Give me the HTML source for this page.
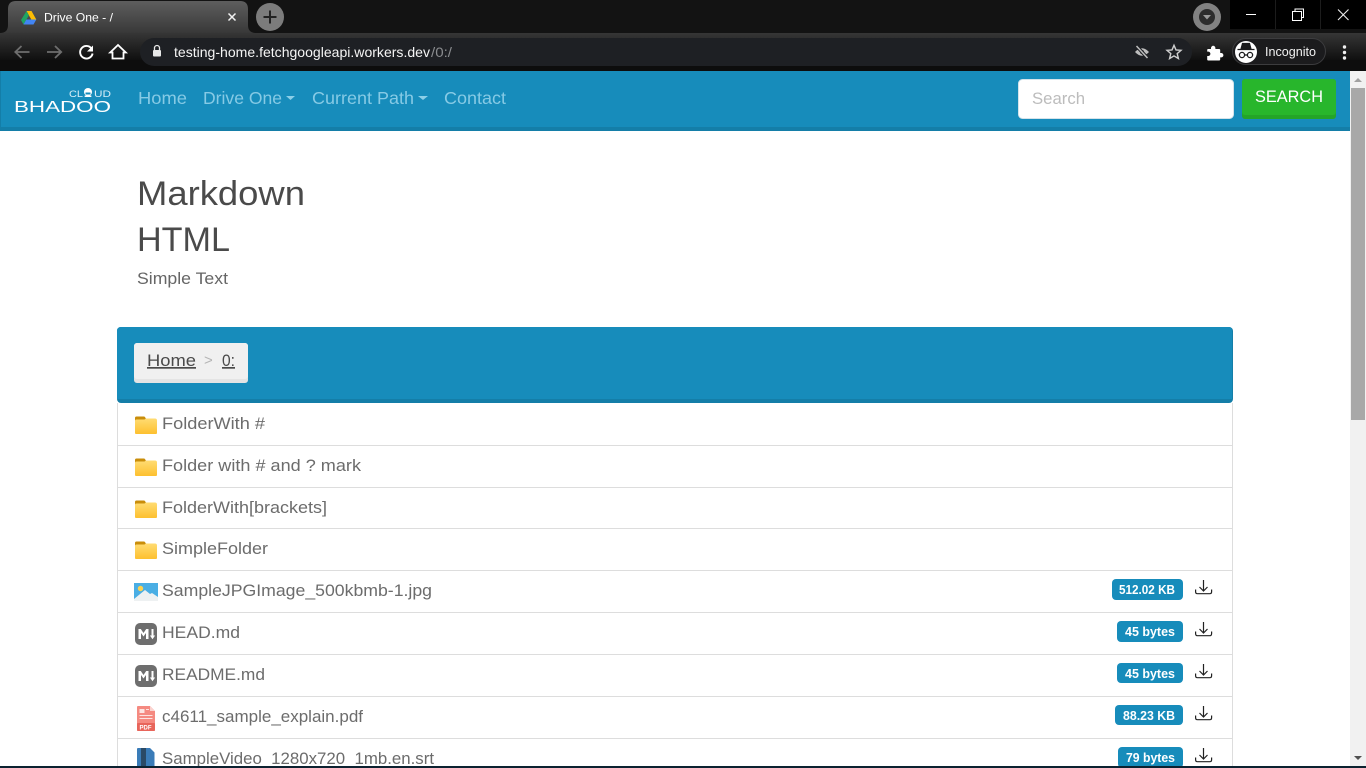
<!DOCTYPE html>
<html lang="en"><head><meta charset="utf-8"><title>Drive One - /</title>
<style>
html,body{margin:0;padding:0;width:1366px;height:768px;overflow:hidden;background:#fff}
svg{display:block;position:absolute;left:0;top:0}
text{font-family:"Liberation Sans",sans-serif}
.m{fill:#6c6c6c;font-size:17px}
.n{fill:#86cae5;font-size:17.5px}
.b{fill:#fff;font-size:13px;font-weight:bold}
.d{fill:none;stroke:#222;stroke-width:1.2}
</style></head><body>
<svg width="1366" height="768" viewBox="0 0 1366 768" xmlns="http://www.w3.org/2000/svg">
<defs>
<linearGradient id="tab" x1="0" y1="0" x2="0" y2="1"><stop offset="0" stop-color="#5e5e5e"/><stop offset="1" stop-color="#383838"/></linearGradient>
<linearGradient id="tb" x1="0" y1="0" x2="0" y2="1"><stop offset="0" stop-color="#363636"/><stop offset="1" stop-color="#0e0e0e"/></linearGradient>
<linearGradient id="fo" x1="0" y1="0" x2="0" y2="1"><stop offset="0" stop-color="#ffdc73"/><stop offset="1" stop-color="#fdc02f"/></linearGradient>
<g id="folder"><path d="M0 3q0-1.500 1.500-1.500h7.500q1 0 2 2.500v3H0z" fill="#c98d0a"/><path d="M0 6q0-1.500 1.500-1.500h8l1.500-1h9q2 0 2 2V18q0 1-1 1H1q-1 0-1-1z" fill="url(#fo)"/></g>
<g id="md"><rect x="0" y="0" width="22" height="22" rx="5" fill="#6e6e6e"/><path d="M3.500 16V6h2.300l2.700 4 2.700-4h2.300v10h-2.500v-6l-2.500 3.500L6 10v6z" fill="#fff"/><path d="M16.500 6h2v6.500h1.600L17.500 16.300 14.900 12.500h1.600z" fill="#fff"/></g>
<g id="dl"><path class="d" d="M8.500 0v10.500M4.500 7l4 4 4-4"/><path class="d" d="M.6 9.500v2.200q0 2 2 2h12q2 0 2-2V9.500"/></g>
</defs>

<!-- browser frame -->
<rect width="1366" height="71" fill="#0e0e0e"/>
<rect width="1366" height="33" fill="#131313"/>
<rect x="1230" y="0" width="136" height="29" fill="#000"/>
<path d="M1275.500 0v29M1320.500 0v29" stroke="#1c1c1c"/>
<rect y="33" width="1366" height="28" fill="url(#tb)"/>
<rect y="60" width="1366" height="11" fill="#0d0d0d"/>
<path d="M0 33q8 0 8-8V9q0-8 8-8h224q8 0 8 8v16q0 8 8 8z" fill="url(#tab)"/>
<path d="M26.500 11h5l4.800 8.500h-5z" fill="#fbbc04"/><path d="M26.500 11l-5.500 9 2.500 4.500 5.400-9.200z" fill="#1fa463"/><path d="M23.500 24.500h10l2.800-5H26.300z" fill="#4285f4"/>
<text x="44" y="21.500" fill="#fff" font-size="12" textLength="69" lengthAdjust="spacingAndGlyphs">Drive One - /</text>
<path d="M228.500 13.500l7 7M235.500 13.500l-7 7" stroke="#f2f2f2" stroke-width="1.500"/>
<circle cx="270" cy="17" r="14" fill="#7c7c7c"/><path d="M263.500 17h13M270 10.500v13" stroke="#222" stroke-width="2"/>
<circle cx="1207" cy="17" r="14" fill="#828282"/><circle cx="1207" cy="17" r="8" fill="#2c2c2c"/><path d="M1203 15h8l-4 4.500z" fill="#9a9a9a"/>
<path d="M1246 14.500h10" stroke="#fff" stroke-width="1"/>
<path d="M1292.500 11.500h9v9h-9zM1295 11.500V9h8.500v8.500h-2" fill="none" stroke="#fff" stroke-width="1"/>
<path d="M1338 9.500l10.500 10.500M1348.500 9.500L1338 20" stroke="#eee" stroke-width="1.100"/>

<path d="M29.500 52H15.500M21.500 46l-6.200 6 6.200 6" fill="none" stroke="#6e6e6e" stroke-width="1.800"/>
<path d="M47 52h14M55 46l6.200 6-6.200 6" fill="none" stroke="#6e6e6e" stroke-width="1.800"/>
<path d="M91.500 48.500a6.300 6.300 0 1 0 1.100 5" fill="none" stroke="#fff" stroke-width="1.900"/><path d="M93 45.500v6h-6z" fill="#fff"/>
<path d="M118 45l-7.800 7.500h2.300v6h11v-6h2.300z" fill="none" stroke="#fff" stroke-width="1.800"/>
<rect x="140" y="38" width="1052" height="28" rx="14" fill="#1e2024"/>
<path d="M154.500 50v-2a2.500 2.500 0 0 1 5 0v2" fill="none" stroke="#e8e8e8" stroke-width="1.300"/><rect x="153" y="50" width="8" height="6.500" rx="1" fill="#e8e8e8"/>
<text x="174" y="57" fill="#f5f5f5" font-size="14" textLength="256" lengthAdjust="spacingAndGlyphs">testing-home.fetchgoogleapi.workers.dev</text>
<text x="431" y="57" fill="#8b8d90" font-size="14" textLength="21" lengthAdjust="spacingAndGlyphs">/0:/</text>
<path d="M1135 52q7-7.500 14 0-7 7.500-14 0z" fill="#bdbdbd"/><circle cx="1142" cy="52" r="2" fill="#1e2024"/><path d="M1136.500 46l11 12" stroke="#1e2024" stroke-width="3.500"/><path d="M1136.500 46l11 12" stroke="#bdbdbd" stroke-width="1.500"/>
<path d="M1174 45.300l2 4.600 5 .4-3.800 3.300 1.200 4.900-4.400-2.600-4.400 2.600 1.200-4.900-3.800-3.300 5-.4z" fill="none" stroke="#cfcfcf" stroke-width="1.400"/>
<path d="M1207.500 49h3.500v-1a2.200 2.200 0 0 1 4.400 0v1h3.800q1 0 1 1v3h1a2.200 2.200 0 0 1 0 4.400h-1v2.100q0 1-1 1h-11q-1 0-1-1v-3.500h1a2.200 2.200 0 0 0 0-4.400h-1V50q0-1 .800-1z" fill="#fff"/>
<rect x="1232.500" y="38.500" width="93" height="26" rx="13" fill="#1b1b1d" stroke="#3c3c3e"/>
<circle cx="1246" cy="52" r="11" fill="#fff"/>
<path d="M1237.500 49.500h17M1241 49l1.500-5.500h7L1251 49z" fill="#1b1b1d" stroke="#1b1b1d" stroke-width="1.200"/>
<circle cx="1242" cy="55" r="2.600" fill="none" stroke="#1b1b1d" stroke-width="1.300"/><circle cx="1250" cy="55" r="2.600" fill="none" stroke="#1b1b1d" stroke-width="1.300"/><path d="M1244.600 55h2.800" stroke="#1b1b1d" stroke-width="1.300"/>
<text x="1265" y="56" fill="#f2f2f2" font-size="12.500" textLength="51" lengthAdjust="spacingAndGlyphs">Incognito</text>
<circle cx="1344.500" cy="47" r="1.700" fill="#f0f0f0"/><circle cx="1344.500" cy="52.500" r="1.700" fill="#f0f0f0"/><circle cx="1344.500" cy="58" r="1.700" fill="#f0f0f0"/>

<!-- scrollbar -->
<rect x="1350" y="71" width="16" height="697" fill="#f1f1f1"/>
<rect x="1351" y="88" width="14" height="332" fill="#a8a8a8"/>
<path d="M1354 82h8l-4-4z" fill="#a0a0a0"/><path d="M1354 756h8l-4 4z" fill="#505050"/>

<!-- navbar -->
<rect y="71" width="1350" height="60" fill="#178cbb"/>
<rect y="127" width="1350" height="4" fill="#147ea8"/>
<rect y="71" width="1" height="60" fill="#147ea8"/>
<text x="69" y="97" font-size="9.500" textLength="14" lengthAdjust="spacingAndGlyphs" fill="#d8eef7">CL</text>
<circle cx="88" cy="92" r="4" fill="#fff"/><rect x="85.500" y="92.500" width="5" height="2" fill="#178cbb"/>
<rect x="84.500" y="95.500" width="7" height="1.500" rx=".7" fill="#fff"/>
<text x="94" y="97" font-size="9.500" textLength="17" lengthAdjust="spacingAndGlyphs" fill="#d8eef7">UD</text>
<text x="14" y="112" font-size="15.500" textLength="97" lengthAdjust="spacingAndGlyphs" fill="#fff">BHADOO</text>

<text class="n" x="138" y="104" textLength="49" lengthAdjust="spacingAndGlyphs">Home</text>
<text class="n" x="203" y="104" textLength="79" lengthAdjust="spacingAndGlyphs">Drive One</text>
<path d="M286 96h9l-4.500 4z" fill="#8ccfe8"/>
<text class="n" x="312" y="104" textLength="102" lengthAdjust="spacingAndGlyphs">Current Path</text>
<path d="M418 96h10l-5 4z" fill="#8ccfe8"/>
<text class="n" x="444" y="104" textLength="62" lengthAdjust="spacingAndGlyphs">Contact</text>

<rect x="1018.500" y="79.500" width="215" height="39" rx="4" fill="#fff" stroke="#d5e3ea"/>
<text x="1032" y="104" font-size="17" fill="#bcbcbc" textLength="53" lengthAdjust="spacingAndGlyphs">Search</text>
<rect x="1242" y="79" width="94" height="40" rx="3" fill="#24a428"/>
<rect x="1242" y="79" width="94" height="36" rx="3" fill="#28b62c"/>
<text x="1255" y="102" font-size="17" fill="#fff" textLength="68" lengthAdjust="spacingAndGlyphs">SEARCH</text>

<!-- headings -->
<text x="137" y="205" font-size="34" fill="#4a4a4a" textLength="168" lengthAdjust="spacingAndGlyphs">Markdown</text>
<text x="137" y="251" font-size="34" fill="#4a4a4a" textLength="93" lengthAdjust="spacingAndGlyphs">HTML</text>
<text x="137" y="284" font-size="16.500" fill="#666" textLength="91" lengthAdjust="spacingAndGlyphs">Simple Text</text>

<!-- breadcrumb -->
<rect x="117" y="327" width="1116" height="76" rx="4" fill="#147ea8"/>
<path d="M117 331q0-4 4-4h1108q3 0 3 4v68H117z" fill="#178cbb"/>
<rect x="134" y="343" width="114" height="40" rx="3" fill="#e4e4e4"/>
<rect x="134" y="343" width="114" height="36" rx="3" fill="#f0f0f0"/>
<text x="147" y="366" font-size="17" fill="#4a4a4a" textLength="49" lengthAdjust="spacingAndGlyphs" text-decoration="underline">Home</text>
<text x="204" y="365" font-size="15" fill="#b5b5b5">&gt;</text>
<text x="222" y="366" font-size="17" fill="#4a4a4a" textLength="13" lengthAdjust="spacingAndGlyphs" text-decoration="underline">0:</text>

<!-- list -->
<path d="M117.500 403v365M1232.500 403v365" stroke="#ddd"/>
<path d="M117 445.500h1116M117 487.500h1116M117 528.500h1116M117 570.500h1116M117 612.500h1116M117 654.500h1116M117 696.500h1116M117 738.500h1116" stroke="#ddd"/>

<use href="#folder" x="135" y="415"/>
<text class="m" x="162" y="429" textLength="103" lengthAdjust="spacingAndGlyphs">FolderWith #</text>
<use href="#folder" x="135" y="457"/>
<text class="m" x="162" y="471" textLength="199" lengthAdjust="spacingAndGlyphs">Folder with # and ? mark</text>
<use href="#folder" x="135" y="499"/>
<text class="m" x="162" y="513" textLength="165" lengthAdjust="spacingAndGlyphs">FolderWith[brackets]</text>
<use href="#folder" x="135" y="540"/>
<text class="m" x="162" y="554" textLength="106" lengthAdjust="spacingAndGlyphs">SimpleFolder</text>

<rect x="134" y="583" width="24" height="18" fill="#4aaee4"/>
<path d="M134 601v-2l11-9 5 4 2-1 6 4v4z" fill="#eef1f2"/><circle cx="140.500" cy="588.500" r="2.700" fill="#fdd24f"/>
<text class="m" x="162" y="596" textLength="270" lengthAdjust="spacingAndGlyphs">SampleJPGImage_500kbmb-1.jpg</text>

<use href="#md" x="135" y="623"/>
<text class="m" x="162" y="638" textLength="78" lengthAdjust="spacingAndGlyphs">HEAD.md</text>
<use href="#md" x="135" y="665"/>
<text class="m" x="162" y="680" textLength="103" lengthAdjust="spacingAndGlyphs">README.md</text>

<path d="M138 706h12l5 5v19q0 1-1 1h-16q-1 0-1-1v-23q0-1 1-1z" fill="#f58a81"/>
<path d="M150 706l5 5h-5z" fill="#fbd3cf"/>
<path d="M139.500 709h5v4h-5zM146 709h3v1h-3zM139.500 715h13v1h-13zM139.500 718h13v1h-13z" fill="#fde3e0"/>
<rect x="137" y="723" width="18" height="8" rx="1" fill="#e8655b"/>
<text x="139.500" y="729.500" font-size="6" font-weight="bold" fill="#fff">PDF</text>
<text class="m" x="162" y="722" textLength="201" lengthAdjust="spacingAndGlyphs">c4611_sample_explain.pdf</text>

<path d="M138 748h12l4.500 4.500V768H137v-19q0-1 1-1z" fill="#3a7cb8"/>
<rect x="141" y="748" width="5" height="20" fill="#2a4a66"/>
<text class="m" x="162" y="764" textLength="272" lengthAdjust="spacingAndGlyphs">SampleVideo_1280x720_1mb.en.srt</text>

<!-- badges -->
<rect x="1112" y="579" width="71" height="21" rx="4" fill="#178cbb"/>
<text class="b" x="1119" y="594" textLength="56" lengthAdjust="spacingAndGlyphs">512.02 KB</text>
<rect x="1117" y="621" width="66" height="21" rx="4" fill="#178cbb"/>
<text class="b" x="1125" y="636" textLength="50" lengthAdjust="spacingAndGlyphs">45 bytes</text>
<rect x="1117" y="663" width="66" height="20" rx="4" fill="#178cbb"/>
<text class="b" x="1125" y="678" textLength="50" lengthAdjust="spacingAndGlyphs">45 bytes</text>
<rect x="1115" y="705" width="68" height="20" rx="4" fill="#178cbb"/>
<text class="b" x="1123" y="720" textLength="52" lengthAdjust="spacingAndGlyphs">88.23 KB</text>
<rect x="1118" y="747" width="65" height="21" rx="4" fill="#178cbb"/>
<text class="b" x="1126" y="762" textLength="49" lengthAdjust="spacingAndGlyphs">79 bytes</text>

<use href="#dl" x="1195" y="580"/>
<use href="#dl" x="1195" y="622"/>
<use href="#dl" x="1195" y="664"/>
<use href="#dl" x="1195" y="706"/>
<use href="#dl" x="1195" y="748"/>

<!-- taskbar sliver -->
<rect y="766" width="1366" height="2" fill="#0c2230"/>
</svg>
</body></html>
